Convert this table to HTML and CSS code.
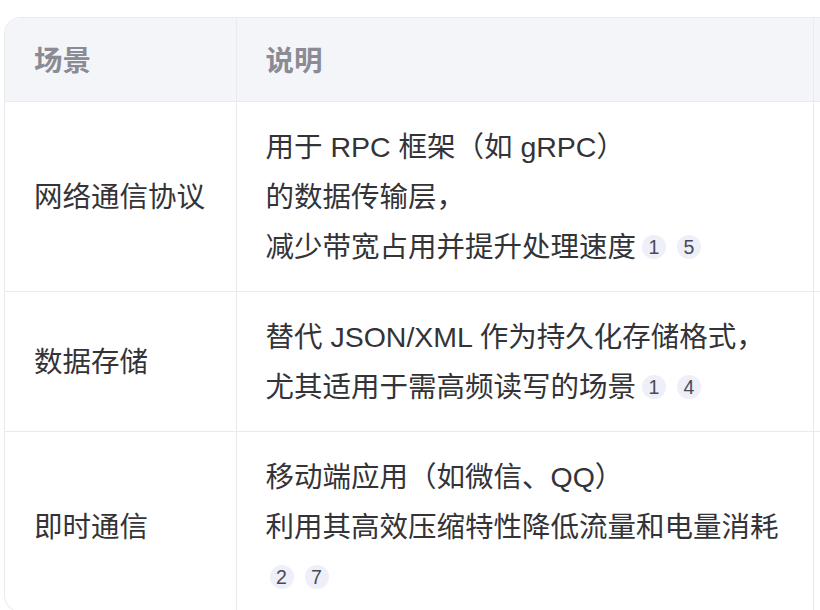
FILE: index.html
```html
<!DOCTYPE html>
<html lang="zh-CN">
<head>
<meta charset="utf-8">
<title>场景说明</title>
<link rel="stylesheet" href="styles.css">
</head>
<body>
<div class="viewport">
  <div class="table-wrap">
    <table class="scene-table">
      <colgroup>
        <col class="col-scene">
        <col class="col-desc">
        <col class="col-extra">
      </colgroup>
      <thead>
        <tr>
          <th>场景</th>
          <th>说明</th>
          <th></th>
        </tr>
      </thead>
      <tbody>
        <tr>
          <td class="scene">网络通信协议</td>
          <td class="desc">用于 RPC 框架（如 gRPC）<br>的数据传输层，<br>减少带宽占用并提升处理速度<span class="refs"><span class="ref">1</span><span class="ref">5</span></span></td>
          <td></td>
        </tr>
        <tr>
          <td class="scene">数据存储</td>
          <td class="desc">替代 JSON/XML 作为持久化存储格式，<br>尤其适用于需高频读写的场景<span class="refs"><span class="ref">1</span><span class="ref">4</span></span></td>
          <td></td>
        </tr>
        <tr class="last">
          <td class="scene">即时通信</td>
          <td class="desc">移动端应用（如微信、QQ）<br>利用其高效压缩特性降低流量和电量消耗<br><span class="refs refs-first"><span class="ref">2</span><span class="ref">7</span></span></td>
          <td></td>
        </tr>
      </tbody>
    </table>
  </div>
</div>
</body>
</html>
```

FILE: styles.css
```css
html, body {
  margin: 0;
  padding: 0;
  background: #ffffff;
  overflow: hidden;
}

body {
  font-family: "Liberation Sans", "Noto Sans CJK SC", sans-serif;
  color: #333338;
}

.viewport {
  width: 820px;
  height: 610px;
  overflow: hidden;
}

.table-wrap {
  margin: 17px 0 0 4px;
  width: 1100px;
  border: 1px solid #e9eaee;
  border-radius: 16px;
  overflow: hidden;
}

.scene-table {
  width: 100%;
  border-collapse: collapse;
  table-layout: fixed;
}

.col-scene { width: 231px; }
.col-desc { width: 577px; }

.scene-table th,
.scene-table td {
  border-left: 1px solid #e9eaee;
  border-top: 1px solid #e9eaee;
  text-align: left;
  font-size: 28.5px;
  line-height: 50px;
  padding: 20px 28px 19px 29px;
}

.scene-table th:first-child,
.scene-table td:first-child {
  border-left: none;
}

.scene-table thead th {
  border-top: none;
  background: #f4f5f9;
  color: #8b8b95;
  font-weight: 600;
  padding-top: 18px;
  padding-bottom: 15px;
}

.scene-table td.scene {
  vertical-align: middle;
}

.scene-table td.desc {
  vertical-align: top;
}

.scene-table tr.last td {
  padding-bottom: 9px;
}

.refs {
  display: inline-flex;
  gap: 11px;
  margin-left: 6px;
  vertical-align: middle;
  position: relative;
  top: -2px;
}

.refs-first {
  margin-left: 4px;
}

.ref {
  display: inline-flex;
  align-items: center;
  justify-content: center;
  width: 24px;
  height: 24px;
  border-radius: 50%;
  background: #eeeff9;
  color: #4a4a55;
  font-size: 19.5px;
  line-height: 1;
}
```
